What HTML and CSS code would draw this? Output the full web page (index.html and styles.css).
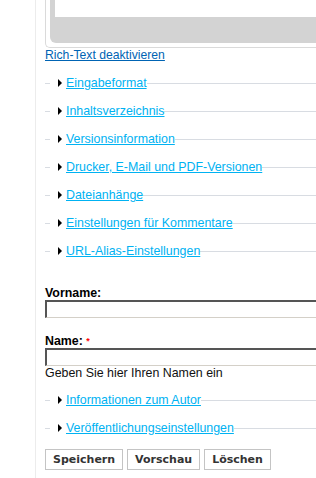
FILE: index.html
```html
<!DOCTYPE html>
<html lang="de">
<head>
    <meta charset="UTF-8">
    <meta name="viewport" content="width=device-width, initial-scale=1.0">
    <title>Inhalt erstellen</title>
    <link rel="stylesheet" href="styles.css">
</head>
<body>
    <div class="page">
        <div class="editor">
            <div class="editor-frame">
                <div class="editor-area"></div>
            </div>
        </div>
        <div class="wysiwyg-toggle"><a href="#">Rich-Text deaktivieren</a></div>

        <fieldset class="collapsed"><legend><span class="arrow"></span><a href="#">Eingabeformat</a></legend></fieldset>
        <fieldset class="collapsed"><legend><span class="arrow"></span><a href="#">Inhaltsverzeichnis</a></legend></fieldset>
        <fieldset class="collapsed"><legend><span class="arrow"></span><a href="#">Versionsinformation</a></legend></fieldset>
        <fieldset class="collapsed"><legend><span class="arrow"></span><a href="#">Drucker, E-Mail und PDF-Versionen</a></legend></fieldset>
        <fieldset class="collapsed"><legend><span class="arrow"></span><a href="#">Dateianhänge</a></legend></fieldset>
        <fieldset class="collapsed"><legend><span class="arrow"></span><a href="#">Einstellungen für Kommentare</a></legend></fieldset>
        <fieldset class="collapsed"><legend><span class="arrow"></span><a href="#">URL-Alias-Einstellungen</a></legend></fieldset>

        <div class="form-item first">
            <label for="edit-vorname">Vorname:</label>
            <input type="text" id="edit-vorname" class="form-text">
        </div>
        <div class="form-item">
            <label for="edit-name">Name: <span class="form-required">*</span></label>
            <input type="text" id="edit-name" class="form-text">
            <div class="description">Geben Sie hier Ihren Namen ein</div>
        </div>

        <fieldset class="collapsed"><legend><span class="arrow"></span><a href="#">Informationen zum Autor</a></legend></fieldset>
        <fieldset class="collapsed"><legend><span class="arrow"></span><a href="#">Veröffentlichungseinstellungen</a></legend></fieldset>

        <div class="buttons">
            <button type="submit">Speichern</button>
            <button type="submit">Vorschau</button>
            <button type="submit">Löschen</button>
        </div>
    </div>
</body>
</html>
```

FILE: styles.css
```css
html, body {
    overflow: hidden;
}
body {
    margin: 0;
    padding: 0;
    background: #fff;
    font-family: "Liberation Sans", Arial, sans-serif;
    font-size: 12.4px;
    color: #000;
}
.page {
    margin-left: 35px;
    width: 340px;
    min-height: 478px;
    padding-left: 9px;
    border-left: 1px solid #ececec;
}
.editor {
    border-left: 1px solid #dadada;
    border-bottom: 1px solid #dadada;
    border-bottom-left-radius: 5px;
    padding: 0 0 4px 4px;
}
.editor-frame {
    background: #d3d3d3;
    border-radius: 0 0 0 6px;
    padding: 0 0 26px 5px;
}
.editor-area {
    height: 17px;
    background: #fff;
}
.wysiwyg-toggle {
    font-size: 12.2px;
    line-height: 15px;
}
.wysiwyg-toggle a {
    color: #0064b4;
}
fieldset {
    margin: 12px 0 0;
    padding: 0 0 0 5px;
    border: none;
    border-top: 1px solid #d8dce2;
    min-width: 0;
}
legend {
    display: flex;
    align-items: center;
    padding: 0;
    line-height: 16px;
}
legend a {
    color: #00b2f2;
}
.arrow {
    width: 0;
    height: 0;
    margin: 0 4px 0 8px;
    border-left: 4px solid #000;
    border-top: 4px solid transparent;
    border-bottom: 4px solid transparent;
}
.form-item {
    margin-top: 17px;
}
.form-item.first {
    margin-top: 28px;
}
.form-item label {
    display: block;
    font-weight: bold;
    line-height: 13px;
}
.form-required {
    color: #f00;
    font-size: 9px;
    vertical-align: top;
}
.form-text {
    display: block;
    width: 100%;
    height: 18px;
    margin: 0;
    padding: 0 2px;
    box-sizing: border-box;
    border-top: 2px solid #555;
    border-left: 2px solid #555;
    border-right: 1px solid #d4d0c8;
    border-bottom: 1px solid #d4d0c8;
    font-family: inherit;
    font-size: 12px;
}
.description {
    line-height: 14px;
    color: #111;
}
.buttons {
    display: flex;
    gap: 4px;
    margin-top: 13px;
}
button {
    margin: 0;
    padding: 2px 7px;
    line-height: 15px;
    border: 1px solid #c4c4c4;
    background: #fff;
    color: #333;
    font-family: "DejaVu Sans", Verdana, sans-serif;
    font-size: 11px;
    font-weight: bold;
}
```
